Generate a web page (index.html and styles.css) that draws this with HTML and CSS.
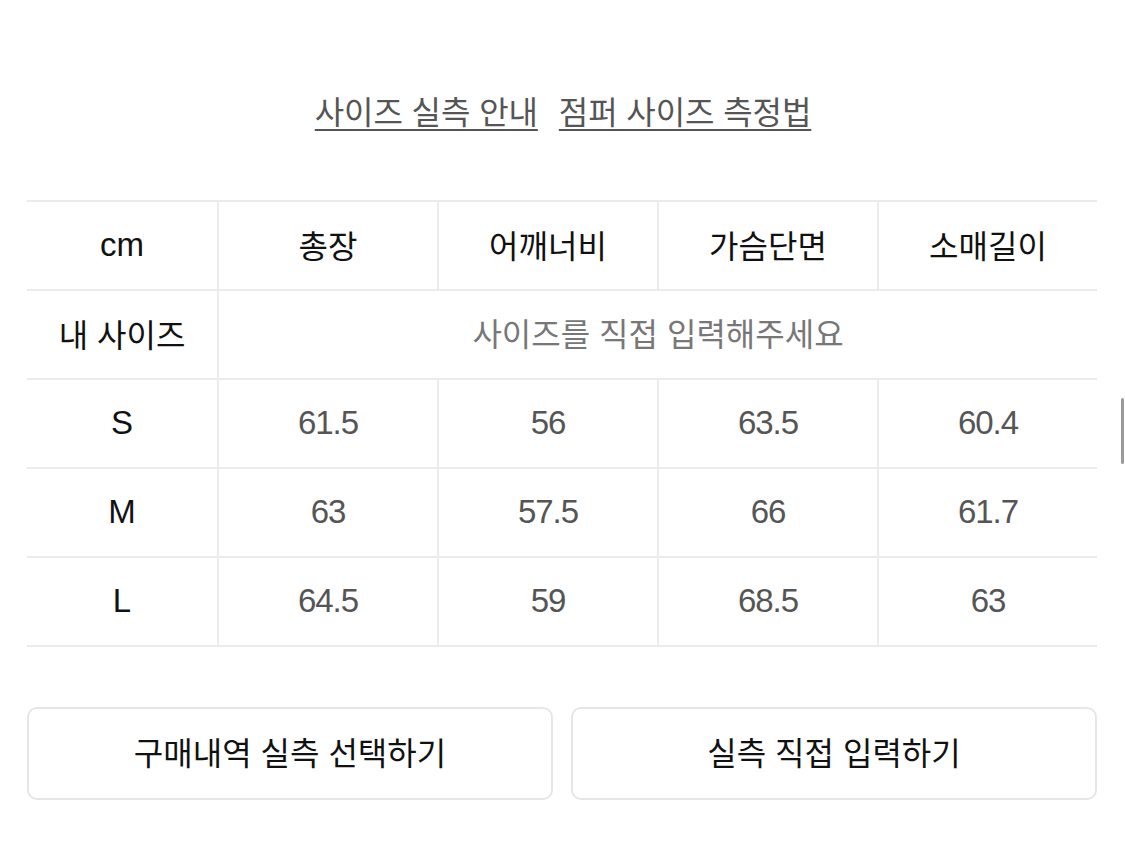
FILE: index.html
```html
<!DOCTYPE html>
<html lang="ko">
<head>
<meta charset="utf-8">
<title>사이즈 실측</title>
<link rel="stylesheet" href="styles.css">
</head>
<body>
<div class="page">
  <nav class="links">
    <a class="link" href="#">사이즈 실측 안내</a>
    <a class="link" href="#">점퍼 사이즈 측정법</a>
  </nav>

  <div class="size-table">
    <div class="cell head first latin">cm</div>
    <div class="cell head">총장</div>
    <div class="cell head">어깨너비</div>
    <div class="cell head">가슴단면</div>
    <div class="cell head">소매길이</div>

    <div class="cell head first">내 사이즈</div>
    <div class="cell placeholder span4">사이즈를 직접 입력해주세요</div>

    <div class="cell head first latin">S</div>
    <div class="cell num">61.5</div>
    <div class="cell num">56</div>
    <div class="cell num">63.5</div>
    <div class="cell num">60.4</div>

    <div class="cell head first latin">M</div>
    <div class="cell num">63</div>
    <div class="cell num">57.5</div>
    <div class="cell num">66</div>
    <div class="cell num">61.7</div>

    <div class="cell head first latin">L</div>
    <div class="cell num">64.5</div>
    <div class="cell num">59</div>
    <div class="cell num">68.5</div>
    <div class="cell num">63</div>
  </div>

  <div class="actions">
    <button class="btn" type="button">구매내역 실측 선택하기</button>
    <button class="btn" type="button">실측 직접 입력하기</button>
  </div>
</div>
<div class="scroll-thumb"></div>
</body>
</html>
```

FILE: styles.css
```css
html, body {
  margin: 0;
  padding: 0;
  background: #ffffff;
}

body {
  font-family: "Liberation Sans", "Noto Sans CJK KR", sans-serif;
  color: #111111;
  width: 1125px;
  height: 844px;
  overflow: hidden;
  position: relative;
}

.page {
  padding: 88px 28px 0 27px;
}

.links {
  display: flex;
  justify-content: center;
  gap: 21px;
  height: 44px;
  align-items: center;
  padding-left: 2px;
}

.link {
  font-family: "Noto Sans CJK KR", sans-serif;
  font-size: 32px;
  line-height: 42px;
  color: #555555;
  text-decoration: underline;
  text-decoration-thickness: 2px;
  text-underline-offset: 5px;
  letter-spacing: -0.1px;
}

.size-table {
  margin-top: 68px;
  display: grid;
  grid-template-columns: 190px repeat(4, 220px);
  grid-auto-rows: 89px;
  border-top: 2px solid #ebebeb;
}

.cell {
  display: flex;
  align-items: center;
  justify-content: center;
  border-bottom: 2px solid #ebebeb;
  border-left: 2px solid #ebebeb;
  font-size: 32px;
  box-sizing: border-box;
}

.cell.first {
  border-left: none;
}

.head {
  font-family: "Noto Sans CJK KR", sans-serif;
  color: #111111;
  padding-bottom: 4px;
}

.head.latin {
  font-family: "Liberation Sans", "Noto Sans CJK KR", sans-serif;
  font-size: 33px;
  padding-bottom: 2px;
}

.num {
  font-family: "Liberation Sans", sans-serif;
  color: #555555;
  font-size: 33px;
  letter-spacing: -1px;
  padding-bottom: 2px;
}

.placeholder {
  font-family: "Noto Sans CJK KR", sans-serif;
  color: #777777;
  padding-bottom: 6px;
}

.span4 {
  grid-column: span 4;
}

.actions {
  margin-top: 60px;
  display: flex;
  gap: 18px;
}

.btn {
  flex: 1;
  height: 93px;
  background: #ffffff;
  border: 2px solid #e6e6e6;
  border-radius: 10px;
  font-family: "Noto Sans CJK KR", sans-serif;
  font-size: 32px;
  color: #111111;
  padding: 0 0 5px 0;
}

.scroll-thumb {
  position: absolute;
  right: 1px;
  top: 398px;
  width: 3px;
  height: 66px;
  background: #9a9a9a;
  border-radius: 2px;
}
```
